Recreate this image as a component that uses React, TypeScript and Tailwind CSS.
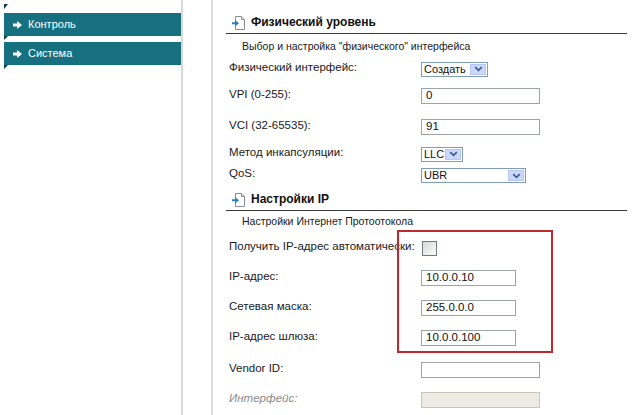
import React from "react";

function WhiteArrow() {
  return (
    <svg width="9" height="8" viewBox="0 0 9 8" className="shrink-0">
      <path d="M0 2.4h4.2V0L9 4 4.2 8V5.6H0z" fill="#ffffff" />
    </svg>
  );
}

function MenuItem({ label }: { label: string }) {
  return (
    <div className="relative ml-[4px] h-[23px] bg-[#17707f] flex items-center pl-[9px] gap-[6px] text-white text-[11px]">
      <WhiteArrow />
      <span>{label}</span>
      <span className="absolute left-0 top-full w-0 h-0 border-t-[4px] border-t-[#0c3f4a] border-r-[4px] border-r-transparent" />
    </div>
  );
}

function DocIcon() {
  return (
    <svg width="13" height="14" viewBox="0 0 13 14" className="shrink-0">
      <path d="M3.5 0.5h6l3 3v10h-9z" fill="#ffffff" stroke="#8a8f96" strokeWidth="1" />
      <path d="M9.5 0.5v3h3" fill="#e8e8e8" stroke="#8a8f96" strokeWidth="1" />
      <path d="M0 6.3h3.2V4.2L7 7.3l-3.8 3.1V8.3H0z" fill="#2f7fc8" />
    </svg>
  );
}

function Chevron() {
  return (
    <svg width="9" height="6" viewBox="0 0 9 6">
      <path d="M1.2 1.2L4.5 4.3 7.8 1.2" fill="none" stroke="#3d5a96" strokeWidth="1.8" />
    </svg>
  );
}

function SelectBox({ value, className }: { value: string; className: string }) {
  return (
    <div className={"flex h-[15px] border border-[#7f9db9] bg-white items-stretch " + className}>
      <div className="flex-1 flex items-center pl-[2px] text-[11px] leading-none text-[#111] whitespace-nowrap overflow-hidden">{value}</div>
      <div className="w-[16px] m-[1px] bg-[#c9d8fc] border border-[#b4c6f1] flex items-center justify-center">
        <Chevron />
      </div>
    </div>
  );
}

function TextBox({ value, className }: { value?: string; className: string }) {
  return (
    <div className={"flex items-center h-[16px] border border-[#9ea3a8] pl-[4px] text-[11.5px] leading-none text-[#111] " + className}>
      {value}
    </div>
  );
}

function Row({ h, label, children, italic }: { h: string; label: string; children: React.ReactNode; italic?: boolean }) {
  return (
    <div className={"flex items-center pl-[3px] " + h}>
      <div className={"w-[192px] shrink-0 mb-[3px] text-[11.5px] whitespace-nowrap " + (italic ? "italic text-[#8a8a8a]" : "text-[#1a1a1a]")}>{label}</div>
      {children}
    </div>
  );
}

function Header({ title, h }: { title: string; h: string }) {
  return (
    <div className={"flex items-end pb-[2px] border-b border-[#3a3a3a] " + h}>
      <div className="ml-[6px] mb-[1px]">
        <DocIcon />
      </div>
      <span className="ml-[6px] text-[12px] font-bold text-[#111]">{title}</span>
    </div>
  );
}

export default function App() {
  return (
    <div className="w-[632px] h-[415px] overflow-hidden bg-white flex font-['Liberation_Sans',Arial,sans-serif]">
      <div className="w-[183px] shrink-0 border-r-2 border-[#d8d8d8] relative pt-[13px]">
        <span className="absolute left-[4px] top-[4px] w-0 h-0 border-t-[5px] border-t-[#0c3f4a] border-r-[4px] border-r-transparent" />
        <div className="flex flex-col gap-[6px]">
          <MenuItem label="Контроль" />
          <MenuItem label="Система" />
        </div>
      </div>
      <div className="w-[28px] shrink-0" />
      <div className="flex-1 relative border-l-2 border-[#dcdcdc] pl-[13px] pr-[5px]">
        <Header title="Физический уровень" h="h-[34px]" />
        <div className="h-[26px] flex items-center pl-[16px] text-[10.5px] text-[#1a1a1a]">
          Выбор и настройка "физического" интерфейса
        </div>
        <Row h="h-[18px]" label="Физический интерфейс:">
          <SelectBox value="Создать" className="w-[67px]" />
        </Row>
        <Row h="h-[36px]" label="VPI (0-255):">
          <TextBox value="0" className="w-[119px]" />
        </Row>
        <Row h="h-[26px]" label="VCI (32-65535):">
          <TextBox value="91" className="w-[119px]" />
        </Row>
        <Row h="h-[28px]" label="Метод инкапсуляции:">
          <SelectBox value="LLC" className="w-[42px]" />
        </Row>
        <Row h="h-[15px]" label="QoS:">
          <SelectBox value="UBR" className="w-[105px]" />
        </Row>
        <Header title="Настройки IP" h="h-[28px]" />
        <div className="h-[22px] flex items-center pl-[16px] text-[10.5px] text-[#1a1a1a]">
          Настройки Интернет Протоотокола
        </div>
        <Row h="h-[30px]" label="Получить IP-адрес автоматически:">
          <div className="ml-[1px] w-[15px] h-[15px] border border-[#6f7a86] bg-gradient-to-br from-[#d8d8d2] to-[#fbfbfb]" />
        </Row>
        <Row h="h-[30px]" label="IP-адрес:">
          <TextBox value="10.0.0.10" className="w-[95px]" />
        </Row>
        <Row h="h-[30px]" label="Сетевая маска:">
          <TextBox value="255.0.0.0" className="w-[95px]" />
        </Row>
        <Row h="h-[30px]" label="IP-адрес шлюза:">
          <TextBox value="10.0.0.100" className="w-[95px]" />
        </Row>
        <Row h="h-[34px]" label="Vendor ID:">
          <TextBox className="w-[119px]" />
        </Row>
        <Row h="h-[26px]" label="Интерфейс:" italic>
          <TextBox className="w-[119px] bg-[#ebebe4] border-[#c9c7ba]" />
        </Row>
        <div className="absolute left-[184px] top-[230px] w-[156px] h-[123px] border-2 border-[#c1272d]" />
      </div>
    </div>
  );
}
